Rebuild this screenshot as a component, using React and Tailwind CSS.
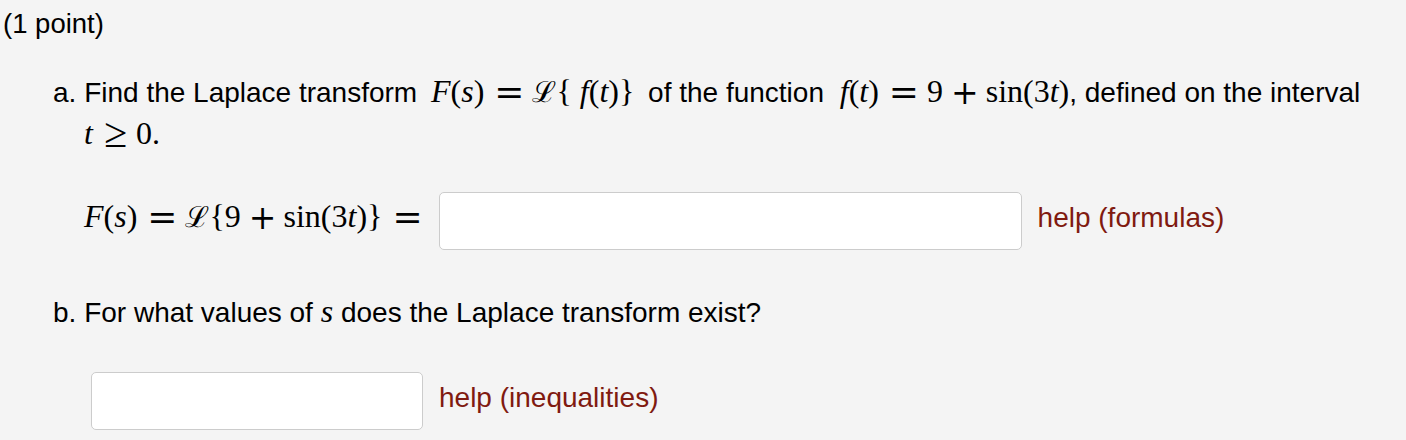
const M = ({ children, className = "" }) => (
  <span className={`font-['Liberation_Serif','DejaVu_Serif',serif] text-[32px] leading-none ${className}`}>
    {children}
  </span>
);
const I = ({ children }) => <i>{children}</i>;
// relation / binary operators are drawn wider, like the TeX math font
const Rel = ({ children }) => (
  <span className="inline-block font-['DejaVu_Serif',serif] text-[36px] leading-none align-[-2px] ml-[10px] mr-[8px]">
    {children}
  </span>
);
const Bin = ({ children }) => (
  <span className="inline-block font-['DejaVu_Serif',serif] text-[33px] leading-none align-[-2px] ml-[8px] mr-[7px]">
    {children}
  </span>
);
const Script = () => <span className="font-['DejaVu_Serif',serif] text-[29px]">ℒ</span>;

export default function App() {
  return (
    <div className="w-[1406px] h-[440px] bg-[#f4f4f4] text-black font-['Liberation_Sans',Arial,sans-serif] text-[28px] overflow-hidden">
      <div className="pl-[3px] pt-[3.5px] leading-[40px] text-[27.5px]">(1 point)</div>

      <div className="pl-[53px] mt-[29px] h-[78px] leading-[39px]">
        <div className="whitespace-nowrap">
          a. Find the Laplace transform{" "}
          <M className="mx-[6px]">
            <I>F</I>(<I>s</I>)<Rel>=</Rel>
            <Script />
            {"{ "}
            <I>f</I>(<I>t</I>){"}"}
          </M>{" "}
          of the function{" "}
          <M className="ml-[8px]">
            <I>f</I>(<I>t</I>)<Rel>=</Rel>9<Bin>+</Bin>sin(3<I>t</I>)
          </M>
          , defined on the interval
        </div>
        <div className="pl-[31px]">
          <M>
            <I>t</I>
            <span className="inline-block text-[42px] leading-none align-[-3px] ml-[11px] mr-[9px]">≥</span>0.
          </M>
        </div>
      </div>

      <div className="pl-[84px] mt-[41px] flex items-start leading-[40px]">
        <span className="mt-[6px]">
          <M>
            <I>F</I>(<I>s</I>)<Rel>=</Rel>
            <Script />
            {"{"}9<Bin>+</Bin>sin(3<I>t</I>){"}"}
            <Rel>=</Rel>
          </M>
        </span>
        <input className="ml-[8px] w-[583px] h-[58px] bg-white border border-[#cccccc] rounded-[5px]" />
        <span className="ml-[16px] mt-[6px] text-[#801a10]">help (formulas)</span>
      </div>

      <div className="pl-[53px] mt-[43px] leading-[39px]">
        b. For what values of{" "}
        <M>
          <I>s</I>
        </M>{" "}
        does the Laplace transform exist?
      </div>

      <div className="pl-[91px] mt-[40px] flex items-start leading-[40px]">
        <input className="w-[332px] h-[58px] bg-white border border-[#cccccc] rounded-[5px]" />
        <span className="ml-[16px] mt-[6px] text-[#801a10]">help (inequalities)</span>
      </div>
    </div>
  );
}
